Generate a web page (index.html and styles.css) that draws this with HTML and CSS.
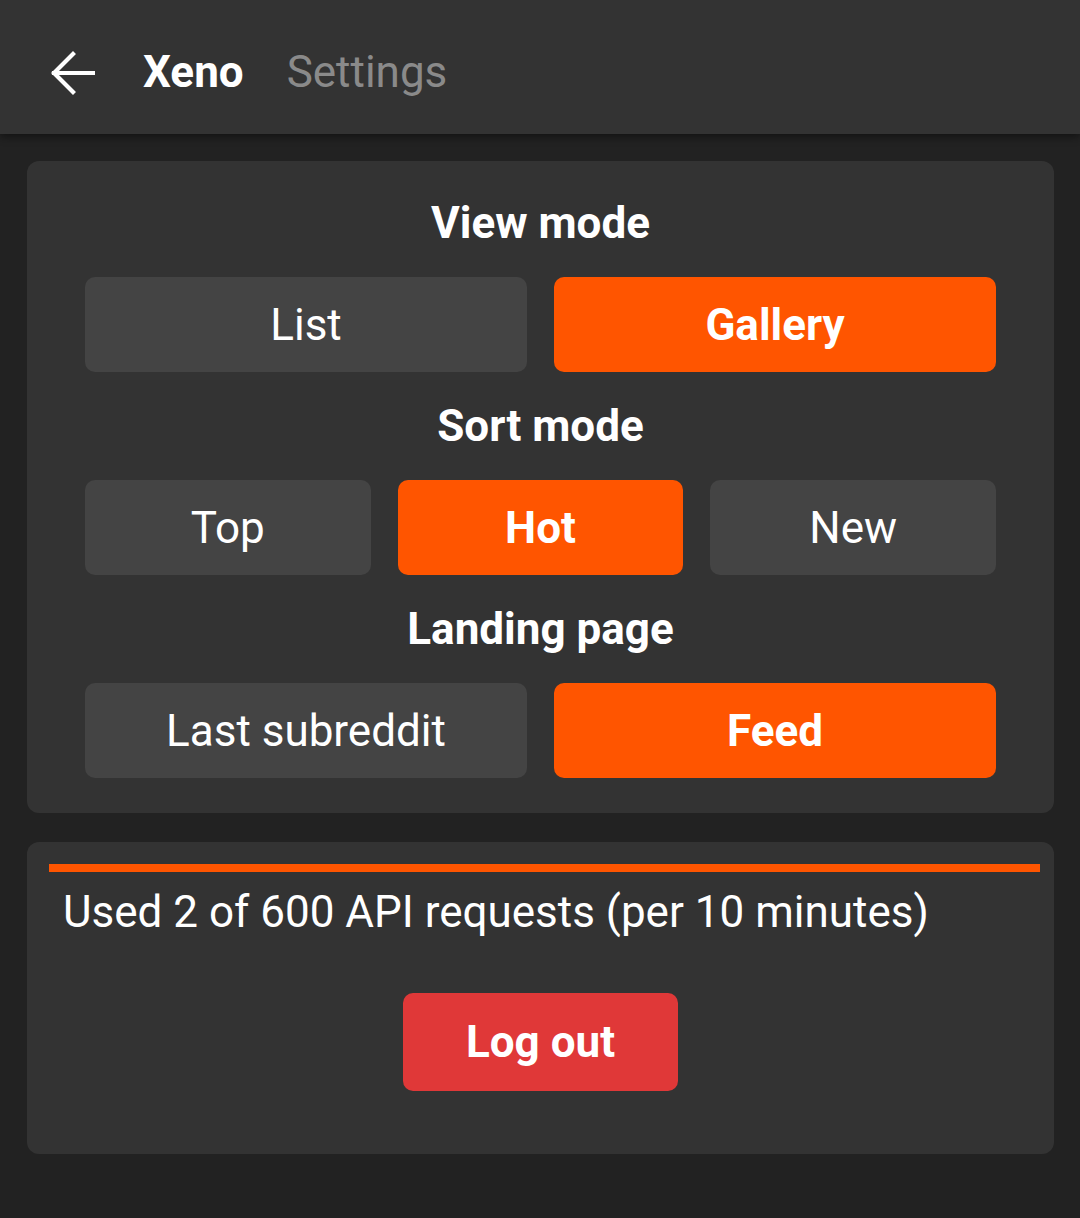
FILE: index.html
```html
<!DOCTYPE html>
<html>
<head>
<meta charset="utf-8">
<link rel="stylesheet" href="styles.css">
</head>
<body>
<header class="topbar">
  <svg class="back" width="44" height="44" viewBox="0 0 44 44" aria-hidden="true">
    <path d="M43 22H3M22 3L3 22L22 41" fill="none" stroke="#ffffff" stroke-width="4.2" stroke-linecap="square" stroke-linejoin="miter"/>
  </svg>
  <span class="app">Xeno</span>
  <span class="page">Settings</span>
</header>
<main class="content">
  <section class="card prefs">
    <h2 class="title">View mode</h2>
    <div class="row two">
      <button class="opt">List</button>
      <button class="opt active">Gallery</button>
    </div>
    <h2 class="title">Sort mode</h2>
    <div class="row three">
      <button class="opt">Top</button>
      <button class="opt active">Hot</button>
      <button class="opt">New</button>
    </div>
    <h2 class="title">Landing page</h2>
    <div class="row two">
      <button class="opt">Last subreddit</button>
      <button class="opt active">Feed</button>
    </div>
  </section>
  <section class="card account">
    <div class="bar"></div>
    <p class="usage">Used 2 of 600 API requests (per 10 minutes)</p>
    <div class="logout-wrap">
      <button class="logout">Log out</button>
    </div>
  </section>
</main>
</body>
</html>
```
FILE: styles.css
```css
* { box-sizing: border-box; }
html, body {
  margin: 0;
  padding: 0;
  background: #222222;
  font-family: Roboto, "Noto Sans", sans-serif;
  color: #ffffff;
}
.topbar {
  height: 134px;
  background: #333333;
  display: flex;
  align-items: center;
  padding-left: 51px;
  padding-top: 9px;
  box-shadow: 0 3px 8px rgba(0,0,0,0.45);
  position: relative;
  z-index: 1;
}
.back {
  display: block;
  margin-top: 3px;
  flex: none;
}
.app {
  margin-left: 48px;
  font-size: 44px;
  font-weight: 700;
  color: #ffffff;
}
.page {
  margin-left: 43px;
  font-size: 44px;
  color: #8a8a8a;
}
.content {
  padding: 27px 26px 0 27px;
  display: flex;
  flex-direction: column;
  gap: 29px;
}
.card {
  background: #333333;
  border-radius: 12px;
}
.prefs {
  padding: 8px 58px 35px;
}
.title {
  margin: 0;
  height: 108px;
  line-height: 108px;
  text-align: center;
  font-size: 44px;
  font-weight: 700;
}
.row {
  display: grid;
  gap: 27px;
}
.row.two { grid-template-columns: 1fr 1fr; }
.row.three { grid-template-columns: 1fr 1fr 1fr; }
.opt {
  height: 95px;
  border: none;
  border-radius: 10px;
  background: #444444;
  color: #ffffff;
  font-family: Roboto, "Noto Sans", sans-serif;
  font-size: 44px;
  font-weight: 400;
  padding: 0;
}
.opt.active {
  background: #ff5500;
  font-weight: 700;
}
.account {
  padding: 22px 14px 62px 22px;
  height: 312px;
}
.bar {
  height: 8px;
  background: #ff5500;
}
.usage {
  margin: 0;
  padding-left: 14px;
  height: 82px;
  line-height: 80px;
  font-size: 44px;
}
.logout-wrap {
  display: flex;
  justify-content: center;
  padding-top: 39px;
}
.logout {
  width: 275px;
  height: 98px;
  border: none;
  border-radius: 10px;
  background: #e03838;
  color: #ffffff;
  font-family: Roboto, "Noto Sans", sans-serif;
  font-size: 44px;
  font-weight: 700;
  margin-left: -8px;
}
```
